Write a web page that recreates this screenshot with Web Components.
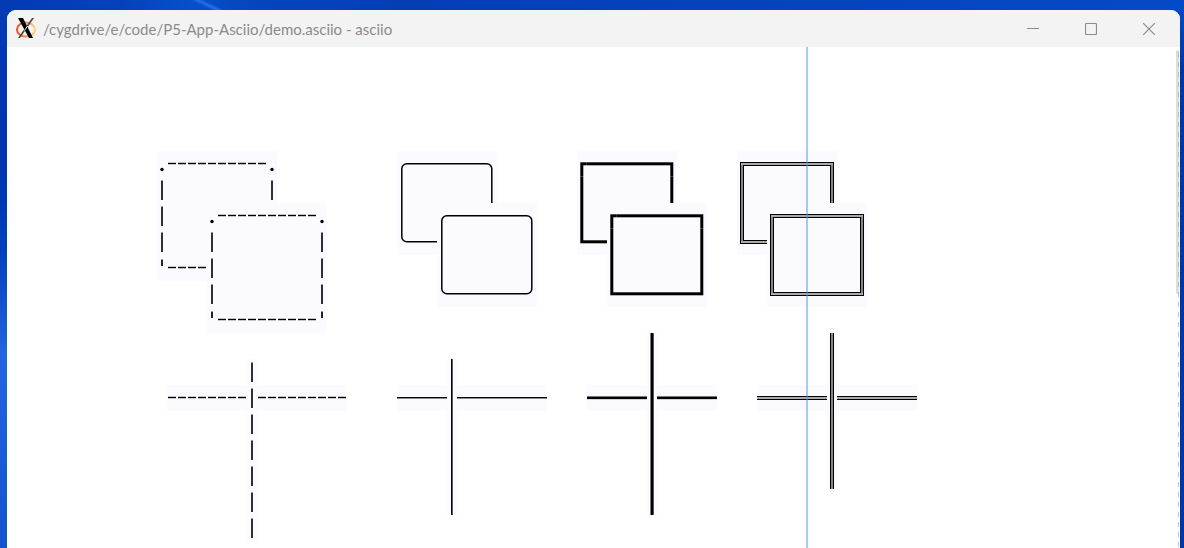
<!DOCTYPE html>
<html lang="en">
<head>
<meta charset="utf-8">
<title>asciio</title>
<style>
  html, body { height: 100%; margin: 0; }
  body { font-family: Lato, "Open Sans", sans-serif; overflow: hidden; }
</style>
</head>
<body>
<desk-top>
  <app-window>
    <title-bar slot="title">/cygdrive/e/code/P5-App-Asciio/demo.asciio - asciio</title-bar>
    <ascii-canvas>
      <ascii-box kind="dashed" col="15" row="4" cols="12" rows="5"></ascii-box>
      <ascii-box kind="dashed" col="20" row="6" cols="12" rows="5"></ascii-box>
      <ascii-box kind="round" col="39" row="4" cols="10" rows="4"></ascii-box>
      <ascii-box kind="round" col="43" row="6" cols="10" rows="4"></ascii-box>
      <ascii-box kind="bold" col="57" row="4" cols="10" rows="4"></ascii-box>
      <ascii-box kind="bold" col="60" row="6" cols="10" rows="4"></ascii-box>
      <ascii-box kind="double" col="73" row="4" cols="10" rows="4"></ascii-box>
      <ascii-box kind="double" col="76" row="6" cols="10" rows="4"></ascii-box>
      <ascii-line kind="dashed" col="16" row="13" cols="18"></ascii-line>
      <ascii-line kind="dashed" col="24" row="12" rows="7"></ascii-line>
      <ascii-line kind="round" col="39" row="13" cols="15"></ascii-line>
      <ascii-line kind="round" col="44" row="12" rows="6"></ascii-line>
      <ascii-line kind="bold" col="58" row="13" cols="13"></ascii-line>
      <ascii-line kind="bold" col="64" row="11" rows="7"></ascii-line>
      <ascii-line kind="double" col="75" row="13" cols="16"></ascii-line>
      <ascii-line kind="double" col="82" row="11" rows="6"></ascii-line>
    </ascii-canvas>
  </app-window>
</desk-top>

<script>
const define = (name, html, Base = HTMLElement) => {
  const template = document.createElement('template');
  template.innerHTML = html;
  customElements.define(name, class extends Base {
    constructor() {
      super();
      this.attachShadow({ mode: 'open' }).append(template.content.cloneNode(true));
    }
  });
};

define('desk-top', `
  <style>
    :host {
      display: flex; box-sizing: border-box; min-height: 100vh; padding: 10px 4px 0 7px;
      background:
        linear-gradient(180deg, #033bb5 0, #0036ae 120px, #0038b2 190px, #0444bc 250px, #2166dc 345px, #1a5fd6 430px, #1153c9 100%) 0 10px / 7px 100% no-repeat,
        linear-gradient(180deg, #0447c2 0, #0036a9 60px, #0036a9 100%) 100% 10px / 4px 100% no-repeat,
        linear-gradient(26deg, transparent 35%, #2470e6 50%, transparent 62%) 192px 0 / 32px 10px no-repeat,
        linear-gradient(90deg, #023bb4 0, #0441b9 120px, #0650cc 190px, #0446bd 250px, #033eb5 400px, #0444bd 800px, #044ac6 100%);
    }
  </style>
  <slot></slot>`);

define('app-window', `
  <style>
    :host { display: flex; flex-direction: column; flex: 1; min-width: 0; overflow: hidden;
      background: #fff; border-radius: 9px 9px 0 0; }
    main { display: flex; flex: 1; min-width: 0; }
    ::slotted(ascii-canvas) { flex: 1; min-width: 0; }
  </style>
  <slot name="title"></slot>
  <main><slot></slot><scroll-track></scroll-track></main>`);

define('title-bar', `
  <style>
    :host { display: flex; align-items: center; height: 37px; background: #f3f3f3; color: #8b8b8b; }
    svg { display: block; }
    .logo { margin: 0 7px 0 8px; flex: none; }
    h1 { flex: 1; margin: 0; font-size: 15px; line-height: 20px; font-weight: 400; white-space: nowrap; }
    nav { display: flex; height: 100%; padding-right: 2px; }
    button { display: flex; align-items: center; justify-content: center; width: 58px; padding: 0;
      border: 0; background: none; color: #8c8c8c; }
  </style>
  <svg class="logo" width="21" height="22" viewBox="0 0 21 22" aria-hidden="true">
    <defs><linearGradient id="ring"><stop offset="0" stop-color="#ee4d25"/><stop offset=".5" stop-color="#f7894a"/><stop offset="1" stop-color="#ffd27c"/></linearGradient></defs>
    <ellipse cx="11" cy="11.500" rx="9" ry="7" fill="none" stroke="url(#ring)" stroke-width="2"/>
    <path d="M17 0h2L5 20H3z" fill="#444"/>
    <path d="M3 0h5l10 20h-4z" fill="#000"/>
    <path d="M12.500 8L9.500 12.500" stroke="#f3f3f3" stroke-width="1"/>
  </svg>
  <h1><slot></slot></h1>
  <nav>
    <button aria-label="Minimize"><svg width="12" height="12" viewBox="0 0 12 12"><path d="M0 5.500h12" stroke="currentColor"/></svg></button>
    <button aria-label="Maximize"><svg width="12" height="12" viewBox="0 0 12 12"><rect x=".5" y=".5" width="11" height="11" rx="1" fill="none" stroke="currentColor" stroke-width="1.200"/></svg></button>
    <button aria-label="Close"><svg width="12" height="12" viewBox="0 0 12 12"><path d="M0 0l12 12M12 0L0 12" stroke="currentColor" stroke-width="1.200"/></svg></button>
  </nav>`);

define('ascii-canvas', `
  <style>
    :host { display: block; position: relative; overflow: hidden; }
    .guide { position: absolute; z-index: 1; left: 799px; top: 0; bottom: 0; width: 2px; background: #4d97e180; }
  </style>
  <slot></slot>
  <div class="guide"></div>`);

define('scroll-track', `
  <style>
    :host { display: block; width: 4px;
      background: repeating-linear-gradient(180deg, #c3c3c3 0 5px, transparent 5px 10px) 2px 5px / 1px 100% no-repeat; }
    div { width: 3px; height: 244px; margin-top: 3px; border-radius: 2px; background: #aab4af70; }
  </style>
  <div></div>`);

/* Every glyph cell of the drawing is 10 x 26 px. */
const CELL_W = 10, CELL_H = 26;
const rect = (x, y, w, h, fill) => `<rect x="${x}" y="${y}" width="${w}" height="${h}" fill="${fill}"/>`;

/* Strokes as [offset, thickness, colour] bands measured from the cell's edge. */
const BANDS = {
  round:  { h: [[12, 1, '#080808'], [13, 1, '#8a8a8e']], v: [[4, 1, '#080808'], [5, 1, '#555a60']] },
  bold:   { h: [[11, 1, '#77777a'], [12, 2, '#000'], [14, 1, '#d3d3d8']], v: [[3, 1, '#77777a'], [4, 2, '#000'], [6, 1, '#55555a']] },
  double: { h: [[11, 1, '#000'], [12, 2, '#a8aca8'], [14, 1, '#000']], v: [[3, 1, '#000'], [4, 2, '#858787'], [6, 1, '#000']] }
};
const hBand = (kind, x, y, w) => BANDS[kind].h.map(([o, t, c]) => rect(x, y + o, w, t, c)).join('');
const vBand = (kind, x, y, h) => BANDS[kind].v.map(([o, t, c]) => rect(x + o, y, t, h, c)).join('');
const hDash = (x, y) => rect(x + 1, y + 11, 8, 3, '#c4c4c9') + rect(x + 1, y + 12, 8, 1, '#000');
const vDash = (x, y) => rect(x + 4, y + 3, 2, 20, '#303030') + rect(x + 4, y + 3, 2, 1, '#999');

class AsciiShape extends HTMLElement {
  constructor() {
    super();
    this.attachShadow({ mode: 'open' });
  }
  connectedCallback() {
    const num = name => Number(this.getAttribute(name) || 1);
    const w = num('cols') * CELL_W, h = num('rows') * CELL_H;
    this.shadowRoot.innerHTML = `
      <style>
        :host { position: absolute; left: ${num('col') * CELL_W}px; top: ${num('row') * CELL_H}px; background: #fafaff; }
        svg { display: block; }
      </style>
      <svg width="${w}" height="${h}" viewBox="0 0 ${w} ${h}" aria-hidden="true">${this.draw(this.getAttribute('kind'), w, h)}</svg>`;
  }
}

customElements.define('ascii-line', class extends AsciiShape {
  draw(kind, w, h) {
    const vertical = this.hasAttribute('rows');
    if (kind !== 'dashed') return vertical ? vBand(kind, 0, 0, h) : hBand(kind, 0, 0, w);
    let out = '';
    if (vertical) for (let y = 0; y < h; y += CELL_H) out += vDash(0, y);
    else for (let x = 0; x < w; x += CELL_W) out += hDash(x, 0);
    return out;
  }
});

customElements.define('ascii-box', class extends AsciiShape {
  draw(kind, w, h) {
    const right = w - CELL_W, bottom = h - CELL_H;
    if (kind === 'dashed') {
      let out = '';
      for (let x = CELL_W; x < right; x += CELL_W) out += hDash(x, 0) + hDash(x, bottom);
      for (const x of [0, right]) {
        out += `<circle cx="${x + 5}" cy="18.500" r="1.700" fill="#000"/>`;
        for (let y = CELL_H; y < bottom; y += CELL_H) out += vDash(x, y);
        out += rect(x + 4, bottom + 5, 2, 6, '#222') + rect(x + 4, bottom + 4, 2, 1, '#999');
      }
      return out;
    }
    if (kind === 'round')
      return `<rect x="4.800" y="12.700" width="${right}" height="${bottom}" rx="5" fill="none" stroke="#000" stroke-width="1.500"/>`;
    if (kind === 'double')
      return rect(3, 11, right + 4, bottom + 4, '#000')
        + rect(4, 12, right + 2, bottom + 2, '#a8aca8')
        + rect(4, 14, 2, bottom - 2, '#858787') + rect(right + 4, 14, 2, bottom - 2, '#858787')
        + rect(6, 14, right - 2, bottom - 2, '#000')
        + rect(7, 15, right - 4, bottom - 4, '#fafaff');
    return `<rect x="4.800" y="12.800" width="${right}" height="${bottom}" fill="none" stroke="#000" stroke-width="3"/>`
      + rect(3, 25, 4, 1, '#ffffff38') + rect(right + 3, 25, 4, 1, '#ffffff38') + rect(9, 11, 1, 4, '#ffffff28');
  }
});
</script>
</body>
</html>
